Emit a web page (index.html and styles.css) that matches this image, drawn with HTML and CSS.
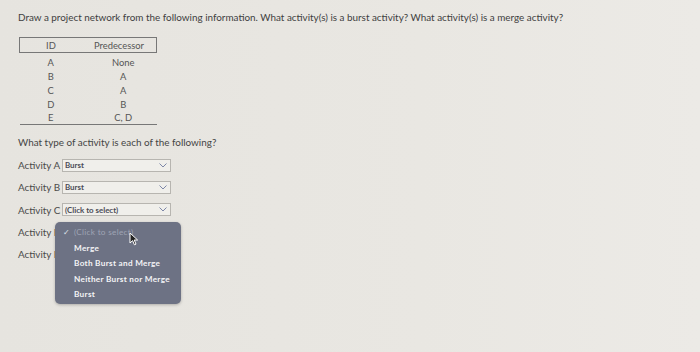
FILE: index.html
```html
<!DOCTYPE html>
<html lang="en">

<head>
    <meta charset="UTF-8">
    <meta name="viewport" content="width=device-width, initial-scale=1.0">
    <title>Project Network</title>
    <link rel="stylesheet" href="styles.css">
</head>

<body>
    <div class="page">
        <p class="question">Draw a project network from the following information. What activity(s) is a burst activity? What activity(s) is a merge activity?</p>

        <table class="preds">
            <tr class="head">
                <th class="c1">ID</th>
                <th class="c2">Predecessor</th>
            </tr>
            <tr><td class="c1">A</td><td class="c2">None</td></tr>
            <tr><td class="c1">B</td><td class="c2">A</td></tr>
            <tr><td class="c1">C</td><td class="c2">A</td></tr>
            <tr><td class="c1">D</td><td class="c2">B</td></tr>
            <tr class="last"><td class="c1">E</td><td class="c2">C, D</td></tr>
        </table>

        <p class="prompt">What type of activity is each of the following?</p>

        <div class="answers">
            <div class="row">
                <span class="lbl">Activity A</span>
                <div class="sel"><span>Burst</span>
                    <svg class="chev" width="8" height="5" viewBox="0 0 8 5"><path d="M0.5 0.5 L4 4 L7.5 0.5" fill="none" stroke="#7d87a8" stroke-width="1"/></svg>
                </div>
            </div>
            <div class="row">
                <span class="lbl">Activity B</span>
                <div class="sel"><span>Burst</span>
                    <svg class="chev" width="8" height="5" viewBox="0 0 8 5"><path d="M0.5 0.5 L4 4 L7.5 0.5" fill="none" stroke="#7d87a8" stroke-width="1"/></svg>
                </div>
            </div>
            <div class="row">
                <span class="lbl">Activity C</span>
                <div class="sel"><span>(Click to select)</span>
                    <svg class="chev" width="8" height="5" viewBox="0 0 8 5"><path d="M0.5 0.5 L4 4 L7.5 0.5" fill="none" stroke="#7d87a8" stroke-width="1"/></svg>
                </div>
            </div>
            <div class="row">
                <span class="lbl">Activity D</span>
            </div>
            <div class="row">
                <span class="lbl">Activity E</span>
            </div>

            <div class="menu">
                <div class="opt cur"><span class="tick">&#10003;</span>(Click to select)</div>
                <div class="opt">Merge</div>
                <div class="opt">Both Burst and Merge</div>
                <div class="opt">Neither Burst nor Merge</div>
                <div class="opt">Burst</div>
                <svg class="cursor" width="10" height="14" viewBox="0 0 10 14">
                    <path d="M1 1 L1 11 L3.6 8.6 L5.4 12.8 L7 12.1 L5.2 8 L8.6 8 Z" fill="#222" stroke="#fff" stroke-width="1"/>
                </svg>
            </div>
        </div>
    </div>
</body>

</html>
```

FILE: styles.css
```css
html,
body {
    margin: 0;
    height: 100%;
}

body {
    background: linear-gradient(90deg, #e6e4df 0%, #e9e7e2 60%, #eceae6 100%);
    font-family: "Lato", "Liberation Sans", sans-serif;
    color: #4a4a4a;
}

.page {
    padding: 11px 18px;
}

.question {
    margin: 0;
    font-size: 9.9px;
    line-height: 12px;
    color: #3e3e3e;
}

.preds {
    margin-top: 14px;
    margin-left: 1px;
    border-collapse: collapse;
    width: 138px;
    font-size: 9.4px;
    color: #555;
}

.preds th {
    font-weight: normal;
    height: 14px;
    padding: 0;
    border-top: 1px solid #777;
    border-bottom: 1px solid #777;
}

.preds .head th:first-child {
    border-left: 1px solid #777;
}

.preds .head th:last-child {
    border-right: 1px solid #777;
}

.preds td {
    height: 14px;
    padding: 0;
    text-align: center;
}

.preds tr:nth-child(2) td {
    padding-top: 2px;
}

.preds .c1 {
    width: 62px;
}

.preds td.c2 {
    padding-left: 8px;
}

.preds .last td {
    border-bottom: 1px solid #777;
    height: 13px;
}

.prompt {
    margin: 11px 0 0;
    font-size: 9.9px;
    color: #444;
}

.answers {
    position: relative;
    margin-top: 6px;
}

.row {
    display: flex;
    align-items: center;
    height: 22.3px;
}

.lbl {
    font-size: 9.9px;
    width: 44px;
    color: #4a4a4a;
}

.sel {
    display: flex;
    justify-content: space-between;
    align-items: center;
    width: 105px;
    height: 11px;
    border: 1px solid #b7b5b0;
    background: #f0efeb;
    font-size: 7.9px;
    font-weight: bold;
    color: #4b4b55;
    padding-left: 2px;
    box-sizing: content-box;
}

.chev {
    margin-right: 3px;
}

.menu {
    position: absolute;
    left: 37px;
    top: 68px;
    width: 126px;
    height: 82px;
    box-sizing: border-box;
    padding: 3px 0 0 19px;
    background: #6d7284;
    border-radius: 5px;
    box-shadow: 0 1px 3px rgba(0, 0, 0, 0.25);
}

.opt {
    position: relative;
    height: 15.6px;
    line-height: 15.6px;
    font-size: 8.2px;
    font-weight: bold;
    letter-spacing: 0.3px;
    color: #f4f4f6;
}

.opt.cur {
    color: #9fa4b4;
    font-weight: normal;
}

.tick {
    position: absolute;
    left: -11px;
    color: #dfe2ea;
    font-size: 8px;
}

.cursor {
    position: absolute;
    left: 74px;
    top: 10px;
}
```
